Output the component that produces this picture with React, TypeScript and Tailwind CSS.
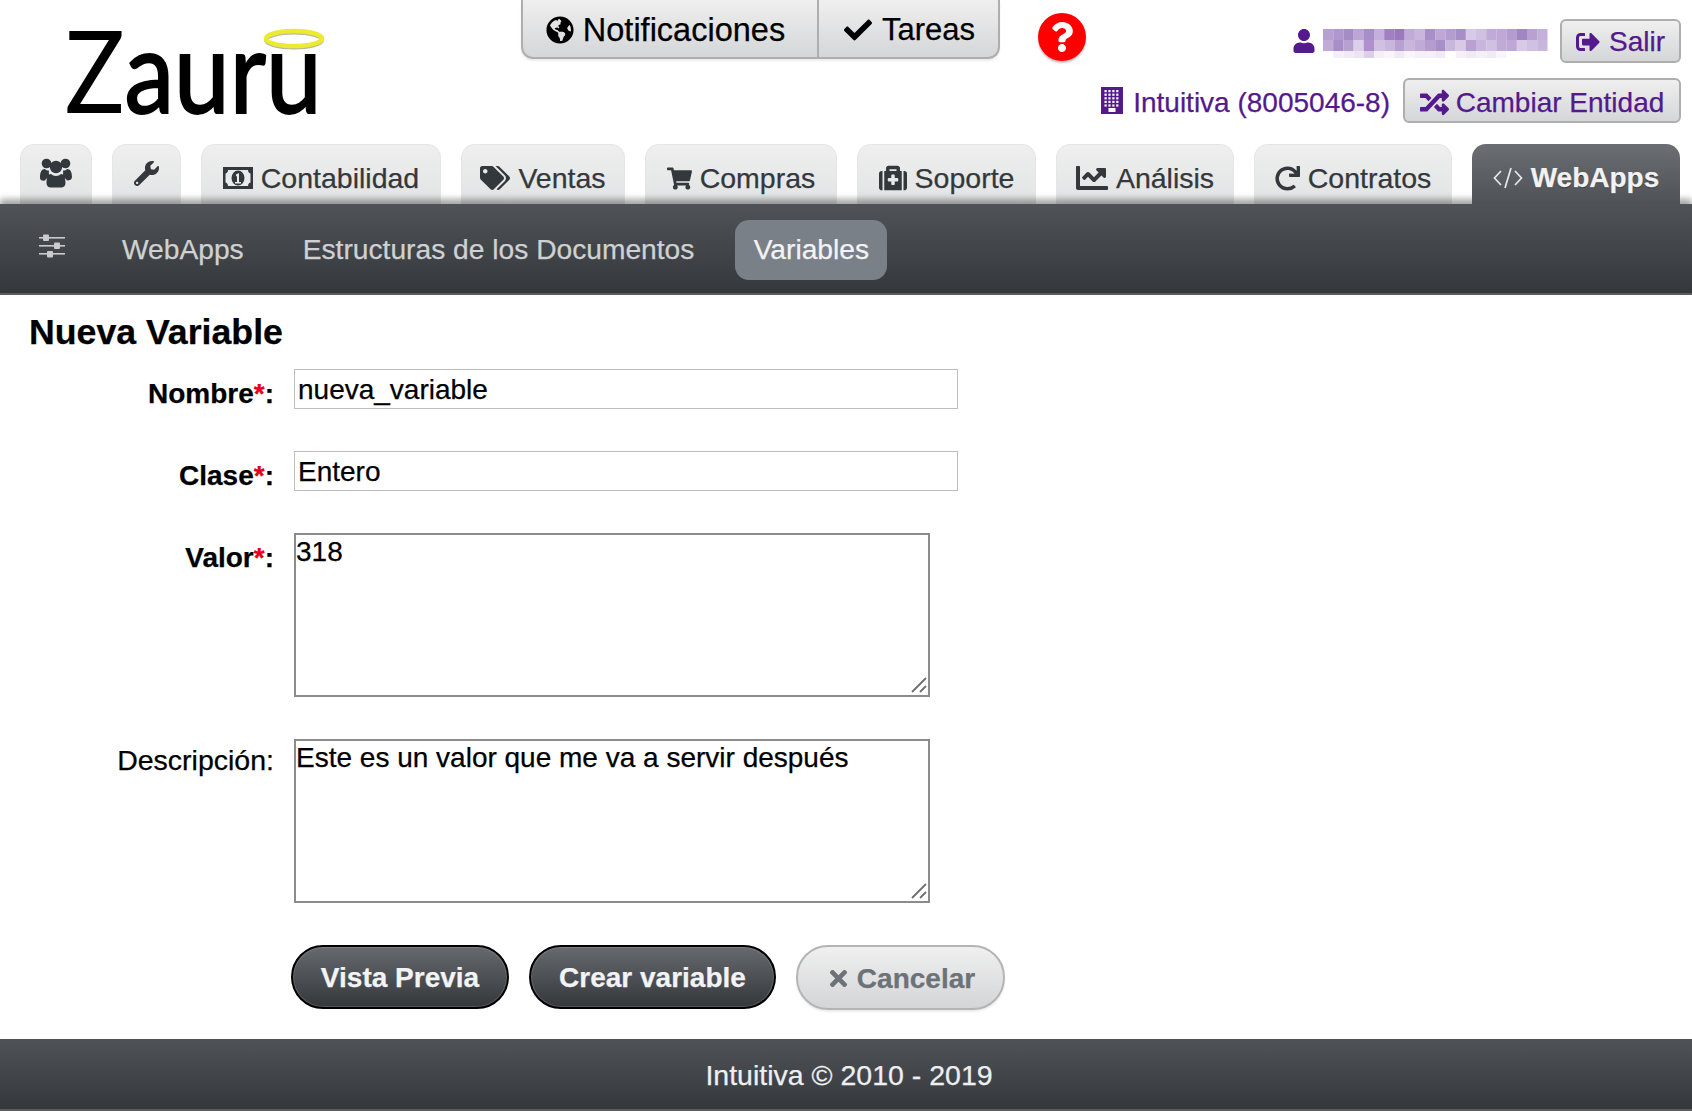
import { FaGlobeAmericas, FaCheck, FaQuestion, FaUser, FaSignOutAlt, FaRandom, FaWrench, FaTags, FaShoppingCart, FaMedkit, FaChartLine, FaRedo, FaTimes } from "react-icons/fa";

const pixels = [
  "b8a0d0 b098cc a68cc6 bca6d6 a88ec8 c4b0da a080c0 9a78bc c0aad8 c8b6dc a98fc8 bfa8d6 b49ccf a88ec8 d8cae6 d0c0e2 c0aad8 bfa8d6 b49ccf a286c4 b8a0d0 c4b0da",
  "c0aad8 a88ec8 b8a0d0 dccfe9 b090cc d0c0e2 c8b6dc b8a0d0 c8b6dc c0aad8 b49ccf a98fc8 c8b6dc d8cae6 b8a0d0 c8b6dc d0c0e2 c0aad8 bfa8d6 d8cae6 d0c0e2 c8b6dc",
  "ffffff f4eff8 f0eaf6 ece4f3 dccfe9 f4eff8 f8f5fb f0eaf6 f8f5fb f4eff8 f4eff8 f0eaf6 ffffff f4eff8 f0eaf6 f4eff8 f0eaf6 f8f5fb ffffff ffffff ffffff ffffff",
].map((r) => r.split(" "));

function Redacted() {
  return (
    <svg width="226" height="30" viewBox="0 0 226 30" className="block">
      {pixels.map((row, y) =>
        row.map((c, x) => <rect key={`${x}-${y}`} x={x * 10.2} y={y * 11} width="10.3" height={y === 2 ? 7 : 11} fill={`#${c}`} />),
      )}
    </svg>
  );
}

function Logo() {
  return (
    <div className="relative h-[144px] w-[521px] shrink-0">
      <div className="w-fit pl-[74px] pt-[4px] font-['Lato',sans-serif] text-[114px] leading-[130px] text-black origin-left scale-x-[0.875] whitespace-nowrap [-webkit-text-stroke:0px]">
        Z<span className="[-webkit-text-stroke:2px_#000]">auru</span>
      </div>
      <svg className="absolute left-[262px] top-[26px]" width="64" height="26" viewBox="0 0 64 26">
        <ellipse cx="32" cy="14" rx="28" ry="7.500" fill="none" stroke="#b9b9a0" strokeWidth="4" />
        <ellipse cx="32" cy="12.600" rx="28" ry="7.500" fill="none" stroke="#eeea30" strokeWidth="4.500" />
      </svg>
    </div>
  );
}

function UsersIcon() {
  return (
    <svg width="32" height="30" viewBox="0 0 32 30" fill="#33383c">
      <circle cx="6.500" cy="5.500" r="4.800" />
      <circle cx="25.500" cy="5.500" r="4.800" />
      <circle cx="16" cy="9" r="6.200" />
      <path d="M0 20c0-6 1.500-9 5-9 1 1 2 1.500 4 1.500-.5 3 0 5 1.500 6.500-3 .5-4.500 1.500-5.500 3.500C2 23 0 22 0 20zM32 20c0-6-1.500-9-5-9-1 1-2 1.500-4 1.500.5 3 0 5-1.500 6.500 3 .5 4.500 1.500 5.500 3.500 3 0 5-1 5-3.500z" />
      <path d="M6.500 25c0-5 1.500-9 4.500-9 1.300 1.200 3 2 5 2s3.700-.8 5-2c3 0 4.500 4 4.500 9 0 3-2 4.500-4.500 4.500H11c-2.500 0-4.500-1.500-4.500-4.500z" />
    </svg>
  );
}

function MoneyIcon() {
  return (
    <svg width="30" height="22" viewBox="0 0 30 22">
      <rect x="0" y="0" width="30" height="22" fill="#33383c" />
      <path d="M5 3h20c0 2 1.500 3.500 2.500 3.500v9c-1 0-2.500 1.500-2.500 3.500H5c0-2-1.500-3.500-2.500-3.500v-9C3.500 6.500 5 5 5 3z" fill="#e9eaeb" />
      <ellipse cx="15" cy="11" rx="6.500" ry="7.500" fill="#33383c" />
      <path d="M13 7.500l3-1.500v9h2v1.500h-6V15h2V9l-1 .5z" fill="#e9eaeb" />
    </svg>
  );
}

function CodeIcon() {
  return (
    <svg width="30" height="24" viewBox="0 0 30 24" fill="none" stroke="#e8e9ea" strokeWidth="1.7">
      <path d="M8 5L1.500 12 8 19M22 5l6.500 7L22 19M18 2l-6 20" />
    </svg>
  );
}

function BuildingIcon() {
  const windows = [];
  for (let r = 0; r < 5; r++) for (let c = 0; c < 4; c++) windows.push(<rect key={`${r}${c}`} x={3.500 + c * 3.900} y={3 + r * 3.600} width="2.200" height="2.200" fill="#fff" />);
  return (
    <svg width="22" height="27" viewBox="0 0 22 27">
      <rect width="22" height="27" fill="#54198c" />
      {windows}
      <rect x="7.500" y="21" width="7" height="4" fill="#fff" />
    </svg>
  );
}

function SlidersIcon() {
  return (
    <svg width="26" height="24" viewBox="0 0 26 24" fill="#c9cbcd" className="block -mt-[8px]">
      <rect x="0" y="3" width="26" height="1.600" />
      <rect x="0" y="11" width="26" height="1.600" />
      <rect x="0" y="19" width="26" height="1.600" />
      <rect x="4" y="0.500" width="6" height="6.500" rx="1" />
      <rect x="15" y="8.500" width="6" height="6.500" rx="1" />
      <rect x="8" y="17" width="6" height="6.500" rx="1" />
    </svg>
  );
}

function Grip() {
  return (
    <svg className="pointer-events-none absolute bottom-[4px] right-[3px]" width="16" height="16" viewBox="0 0 16 16" fill="none" stroke="#6f6f6f" strokeWidth="1.800">
      <path d="M1 15L15 1M9 15l6-6" />
    </svg>
  );
}

const tabs: { w: string; icon: React.ReactNode; label?: string; active?: boolean }[] = [
  { w: "w-[72px]", icon: <UsersIcon /> },
  { w: "w-[69px]", icon: <FaWrench size={25} /> },
  { w: "w-[240px]", icon: <MoneyIcon />, label: "Contabilidad" },
  { w: "w-[164px]", icon: <FaTags size={30} />, label: "Ventas" },
  { w: "w-[192px]", icon: <FaShoppingCart size={25} />, label: "Compras" },
  { w: "w-[179px]", icon: <FaMedkit size={28} />, label: "Soporte" },
  { w: "w-[178px]", icon: <FaChartLine size={32} />, label: "Análisis" },
  { w: "w-[198px]", icon: <FaRedo size={25} />, label: "Contratos" },
  { w: "w-[208px]", icon: <CodeIcon />, label: "WebApps", active: true },
];

function Tab({ w, icon, label, active }: (typeof tabs)[number]) {
  return (
    <div
      className={
        active
          ? `${w} relative z-20 flex h-[60px] shrink-0 items-start justify-center gap-[8px] rounded-t-[14px] bg-gradient-to-b from-[#6b6f73] to-[#4e5257] pt-[13px] text-[28px] font-bold leading-[42px] text-[#f2f2f3] [text-shadow:0_1px_1px_rgba(0,0,0,.5)]`
          : `${w} flex h-[60px] shrink-0 items-start justify-center gap-[8px] rounded-t-[14px] border border-b-0 border-[#e6e6e6] bg-gradient-to-b from-[#efefef] to-[#e2e3e4] ${label ? "pt-[12px]" : "pt-[7px]"} text-[28.5px] leading-[42px] text-[#33383c]`
      }
    >
      <span className="flex h-[42px] items-center">{icon}</span>
      {label && <span>{label}</span>}
    </div>
  );
}

function Req({ name }: { name: string }) {
  return (
    <>
      {name}
      <span className="text-[#e2001a]">*</span>:
    </>
  );
}

function App() {
  return (
    <div className="h-[1118px] w-[1692px] overflow-hidden bg-white font-['Liberation_Sans',Arial,sans-serif] text-black [-webkit-text-stroke:0.25px]">
      <header className="flex h-[144px] items-start">
        <Logo />
        <div className="flex h-[59px] w-[479px] shrink-0 rounded-b-[12px] border-2 border-t-0 border-[#aeaeae] bg-gradient-to-b from-[#efefef] to-[#d5d6d8] leading-[58px] shadow-[0_2px_2px_rgba(0,0,0,.08)]">
          <div className="flex w-[296px] items-center justify-center gap-[9px] border-r-2 border-[#aeaeae] pt-[3px] pr-[9px] text-[32.5px]">
            <FaGlobeAmericas size={28} />
            <span>Notificaciones</span>
          </div>
          <div className="flex flex-1 items-center justify-center gap-[10px] pl-[2px] pt-[3px] text-[31px]">
            <FaCheck size={28} />
            <span>Tareas</span>
          </div>
        </div>
        <div className="ml-[38px] mt-[13px] flex h-[48px] w-[48px] items-center justify-center rounded-full bg-[#ff0000] text-white shadow-[0_2px_2px_rgba(0,0,0,.25)]">
          <FaQuestion size={30} />
        </div>
        <div className="ml-auto flex flex-col items-end pr-[11px] pt-[19px] text-[28px] text-[#54198c]">
          <div className="flex h-[44px] items-center">
            <FaUser size={24} className="mr-[7px]" />
            <div className="mr-[11px] mt-[6px]">
              <Redacted />
            </div>
            <div className="flex h-[44px] w-[121px] items-center justify-center gap-[9px] rounded-[6px] border-2 border-[#aeaeae] bg-gradient-to-b from-[#efefef] to-[#d5d6d8] pt-[2px]">
              <FaSignOutAlt size={24} />
              <span>Salir</span>
            </div>
          </div>
          <div className="mt-[15px] flex h-[45px] items-center">
            <BuildingIcon />
            <span className="ml-[10px] pt-[4px]">Intuitiva (8005046-8)</span>
            <div className="ml-[13px] flex h-[45px] w-[278px] items-center justify-center gap-[7px] rounded-[6px] border-2 border-[#aeaeae] bg-gradient-to-b from-[#efefef] to-[#d5d6d8] pt-[4px]">
              <FaRandom size={29} />
              <span>Cambiar Entidad</span>
            </div>
          </div>
        </div>
      </header>

      <div className="flex h-[60px] gap-[20px] pl-[20px]">
        {tabs.map((t, i) => (
          <Tab key={i} {...t} />
        ))}
      </div>

      <nav className="relative z-10 flex h-[91px] items-center border-b-2 border-[#5a5d60] bg-gradient-to-b from-[#4f5358] to-[#35383b] pl-[39px] pt-[2px] text-[28.2px] text-[#cfd1d3] shadow-[0_-5px_6px_rgba(60,60,60,.45)]">
        <SlidersIcon />
        <span className="ml-[57px]">WebApps</span>
        <span className="ml-[59px]">Estructuras de los Documentos</span>
        <span className="ml-[41px] flex h-[60px] w-[152px] items-center justify-center rounded-[14px] bg-[#7a8087] text-[#f3f3f4]">Variables</span>
      </nav>

      <main className="pl-[29px] pt-[17px]">
        <h1 className="text-[35.7px] font-bold leading-[40px]">Nueva Variable</h1>
      </main>

      <form className="flex flex-col gap-[42px] pt-[17px]">
        <div className="flex gap-[20px]">
          <label className="h-[40px] w-[274px] pt-[10px] text-right text-[28px] font-bold leading-[30px]"><Req name="Nombre" /></label>
          <input readOnly value="nueva_variable" className="h-[40px] w-[664px] border border-[#bdbdbd] px-[3px] pt-[2px] text-[28px] leading-[36px]" />
        </div>
        <div className="flex gap-[20px]">
          <label className="h-[40px] w-[274px] pt-[10px] text-right text-[28px] font-bold leading-[30px]"><Req name="Clase" /></label>
          <input readOnly value="Entero" className="h-[40px] w-[664px] border border-[#bdbdbd] px-[3px] pt-[2px] text-[28px] leading-[36px]" />
        </div>
        <div className="flex gap-[20px]">
          <label className="h-[40px] w-[274px] pt-[10px] text-right text-[28px] font-bold leading-[30px]"><Req name="Valor" /></label>
          <div className="relative h-[164px] w-[636px]">
            <textarea readOnly value="318" className="block h-[164px] w-[636px] resize-none border-2 border-[#8b8b8b] pt-[1px] text-[28px] leading-[32px]" />
            <Grip />
          </div>
        </div>
        <div className="flex gap-[20px]">
          <label className="w-[274px] pt-[3px] text-right text-[28.5px] leading-[36px]">Descripción:</label>
          <div className="relative h-[164px] w-[636px]">
            <textarea readOnly value="Este es un valor que me va a servir después" className="block h-[164px] w-[636px] resize-none border-2 border-[#8b8b8b] pt-[1px] text-[28px] leading-[32px]" />
            <Grip />
          </div>
        </div>
        <div className="flex gap-[20px] pl-[291px]">
          <button type="button" className="h-[64px] w-[218px] rounded-[32px] border-2 border-black bg-gradient-to-b from-[#666a6e] to-[#35383b] pt-[1px] text-[28px] font-bold text-[#f3f3f4] shadow-[inset_0_0_0_1px_rgba(255,255,255,.15)]">Vista Previa</button>
          <button type="button" className="h-[64px] w-[247px] rounded-[32px] border-2 border-black bg-gradient-to-b from-[#666a6e] to-[#35383b] pt-[1px] text-[28px] font-bold text-[#f3f3f4] shadow-[inset_0_0_0_1px_rgba(255,255,255,.15)]">Crear variable</button>
          <button type="button" className="flex h-[65px] w-[209px] items-center justify-center gap-[6px] rounded-[32px] border-2 border-[#b4b4b4] bg-gradient-to-b from-[#f0f0f0] to-[#d4d5d7] pt-[2px] text-[28px] font-bold text-[#6c7278] shadow-[0_2px_2px_rgba(0,0,0,.08)]">
            <FaTimes size={25} />
            Cancelar
          </button>
        </div>
      </form>

      <footer className="mt-[29px] flex h-[72px] items-center justify-center border-b-2 border-[#5a5d60] bg-gradient-to-b from-[#4f5358] to-[#35383b] pl-[6px] pt-[2px] text-[28.5px] text-[#eeeff0]">Intuitiva © 2010 - 2019</footer>
    </div>
  );
}

export default App;
